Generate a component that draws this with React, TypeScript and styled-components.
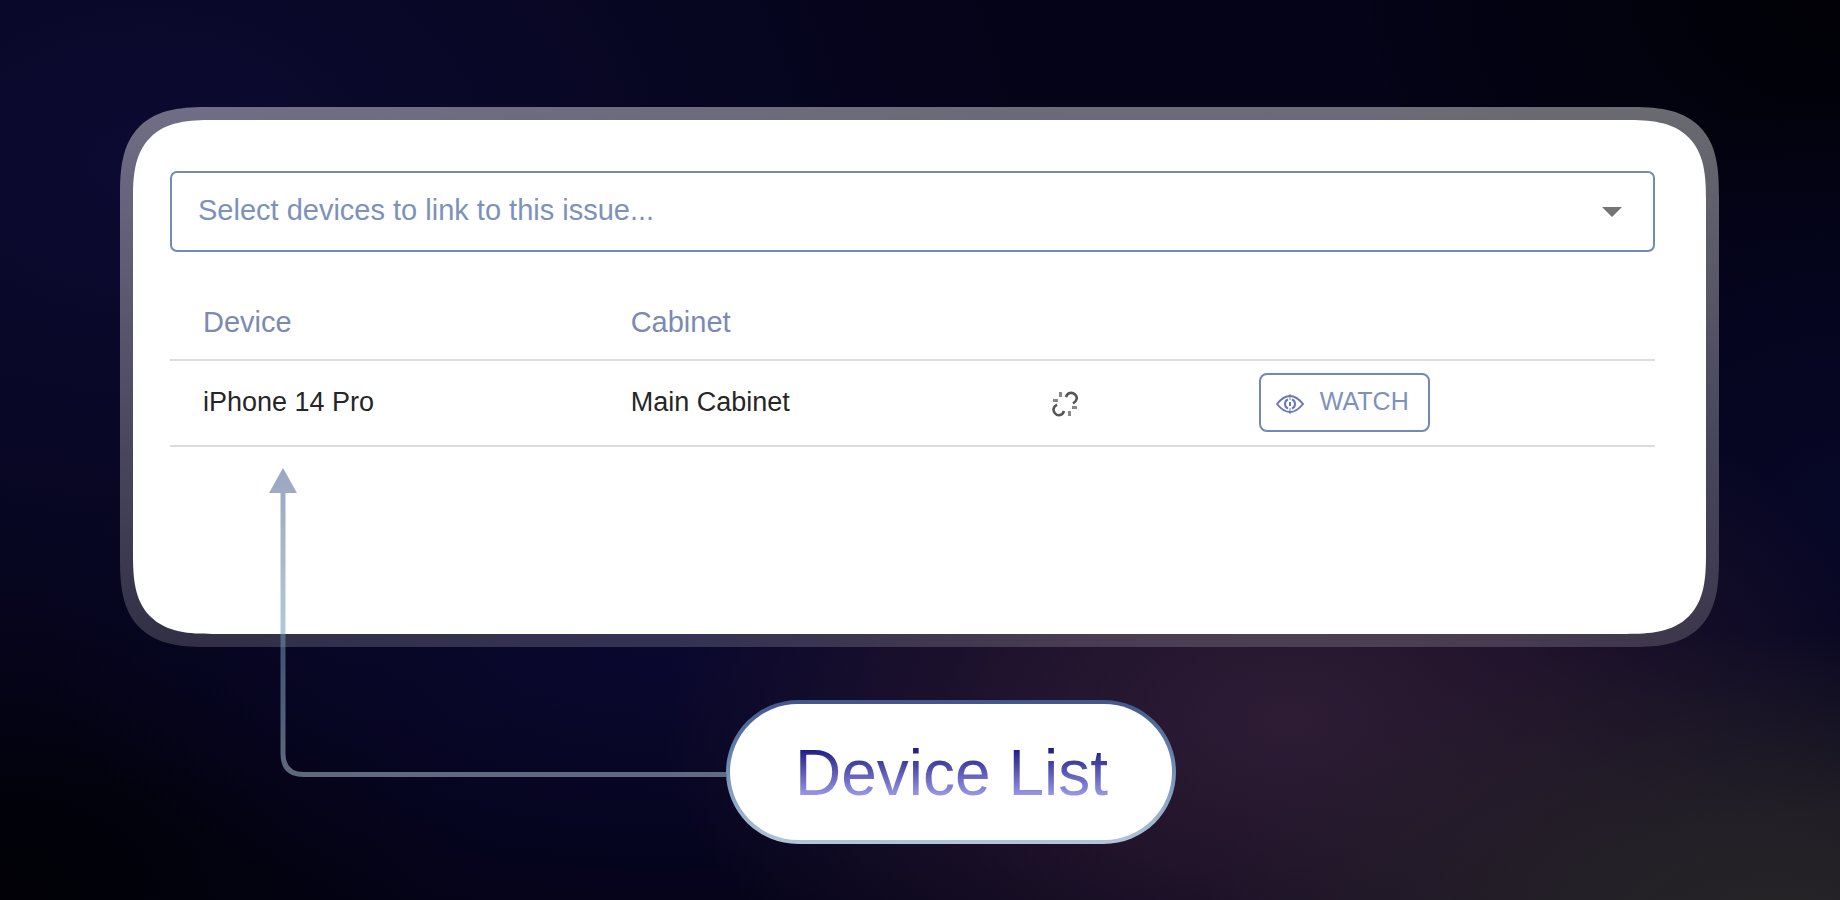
import React from "react";
import styled, { createGlobalStyle } from "styled-components";

const GlobalStyle = createGlobalStyle`
  *, *::before, *::after { box-sizing: border-box; }
  body {
    margin: 0;
    background: #030212;
    font-family: "Liberation Sans", Arial, sans-serif;
  }
`;

const Page = styled.main`
  min-height: 100vh;
  padding: 107px 121px 56px 120px;
  overflow: hidden;
  background:
    radial-gradient(ellipse 32% 34% at 97% 104%, #272527 0%, rgba(39, 36, 40, 0.8) 40%, rgba(38, 35, 42, 0) 100%),
    radial-gradient(ellipse 34% 42% at 70% 80%, #2e1c35 0%, rgba(46, 27, 52, 0.7) 40%, rgba(46, 27, 54, 0) 100%),
    radial-gradient(ellipse 34% 34% at 36% 71%, #0a0830 0%, rgba(10, 8, 48, 0) 100%),
    radial-gradient(ellipse 50% 70% at 8% 18%, #0c0a31 0%, rgba(12, 10, 49, 0) 100%),
    radial-gradient(ellipse 24% 44% at 100% 56%, #070727 0%, rgba(6, 6, 39, 0) 100%),
    radial-gradient(ellipse 26% 36% at 100% 0%, #010106 0%, rgba(1, 1, 6, 0) 100%),
    radial-gradient(ellipse 26% 36% at 0% 100%, #010106 0%, rgba(1, 1, 6, 0) 100%),
    #040317;
`;

const Frame = styled.section`
  padding: 13px;
  border-radius: 60px;
  background: linear-gradient(rgba(255, 255, 255, 0.41), rgba(255, 255, 255, 0.17));

  @supports (corner-shape: superellipse(1.5)) {
    border-radius: 90px;
    corner-shape: superellipse(1.5);
  }
`;

const Panel = styled.div`
  min-height: 514px;
  padding: 51px 51px 51px 37px;
  border-radius: 50px;
  background: #fff;

  @supports (corner-shape: superellipse(1.5)) {
    border-radius: 80px;
    corner-shape: superellipse(1.5);
  }
`;

const SelectField = styled.div`
  position: relative;
`;

const Select = styled.select`
  appearance: none;
  display: block;
  width: 100%;
  height: 81px;
  padding: 0 72px 4px 26px;
  border: 2px solid #6f8bb6;
  border-radius: 7px;
  background: #fff;
  color: #7c92ba;
  font-family: inherit;
  font-size: 29px;
`;

const Caret = styled.svg`
  position: absolute;
  top: 36px;
  right: 33px;
  pointer-events: none;
`;

const Table = styled.table`
  width: 100%;
  margin-top: 36px;
  border-collapse: collapse;
  table-layout: fixed;
`;

const HeadCell = styled.th<{ $width?: string }>`
  width: ${(p) => p.$width ?? "auto"};
  height: 72px;
  padding: 0 0 3px 33px;
  border-bottom: 2px solid #dcdcdc;
  color: #7a8ab5;
  font-size: 29px;
  font-weight: 400;
  text-align: left;
`;

const Cell = styled.td`
  height: 86px;
  padding: 0 0 2px 33px;
  border-bottom: 2px solid #dcdcdc;
  color: #262626;
  font-size: 27px;
`;

const IconButton = styled.button`
  display: flex;
  padding: 4px 0 0;
  border: 0;
  background: none;
  color: #555;
`;

const WatchButton = styled.button`
  display: flex;
  align-items: center;
  gap: 16px;
  height: 59px;
  padding: 0 19px 0 15px;
  border: 2px solid #7189b3;
  border-radius: 8px;
  background: #fff;
  color: #7c92ba;
  font-family: inherit;
  font-size: 25px;
  line-height: 50px;

  svg { margin-top: 4px; }
  span { padding-bottom: 2px; }
`;

const Callout = styled.div`
  display: grid;
  grid-template-columns: 37.9% auto;
  justify-content: start;
  margin-top: 53px;
`;

const ConnectorCell = styled.div`
  position: relative;
`;

const Connector = styled.svg`
  position: absolute;
  left: 149px;
  bottom: 67px;
  width: calc(100% - 149px);
  height: 309px;
  opacity: 0.52;
`;

const Pill = styled.div`
  display: flex;
  align-items: center;
  height: 144px;
  padding: 2px 64px 0 65px;
  border: 4px solid transparent;
  border-radius: 72px;
  background:
    linear-gradient(#fff, #fff) padding-box,
    linear-gradient(#41558a, #7191b7 50%, #b3c5d8) border-box;
`;

const PillLabel = styled.h2`
  margin: 0;
  background: linear-gradient(#211f85 20%, #9a98e6 80%);
  background-clip: text;
  color: transparent;
  font-size: 64px;
  font-weight: 400;
  line-height: 76px;
  white-space: nowrap;
`;

const UnlinkIcon = () => (
  <svg width="26" height="26" viewBox="0 0 26 26" fill="none" stroke="currentColor" strokeWidth="2.6" aria-hidden="true">
    <path d="M14 6C15.500 1.500 20 .8 23 3.500S25 10 21 12.500" />
    <path d="M5 13.500C1 16 .5 19.500 3.200 22.500S10.500 24.500 12 20" />
    <path d="M8.500 1v5M1 9.500h5M17.500 20v5M20 16.500h5" stroke="#888" strokeWidth="3" />
  </svg>
);

const EyeIcon = () => (
  <svg width="28" height="20" viewBox="0 0 28 20" fill="none" stroke="#6c77ba" strokeWidth="2" aria-hidden="true">
    <path d="M1 10C5 5 9 2 14 2S23 5 27 10C23 15 19 18 14 18S5 15 1 10Z" />
    <path d="M12 5.500C8 7 8 13 12 14.500M16 5.500C20 7 20 13 16 14.500" />
    <path d="M14 0v6M14 14v6" strokeWidth="1" />
    <path d="M14 8v4" />
  </svg>
);

export default function App() {
  return (
    <>
      <GlobalStyle />
      <Page>
        <Frame>
          <Panel>
            <SelectField>
              <Select aria-label="Devices" defaultValue="">
                <option value="">Select devices to link to this issue...</option>
                <option value="iphone">iPhone 14 Pro</option>
              </Select>
              <Caret width="20" height="10" viewBox="0 0 20 10" aria-hidden="true">
                <path d="M0 0h20L10 10Z" fill="#757575" />
              </Caret>
            </SelectField>
            <Table>
              <thead>
                <tr>
                  <HeadCell scope="col" $width="28.8%">Device</HeadCell>
                  <HeadCell scope="col" $width="28.4%">Cabinet</HeadCell>
                  <HeadCell $width="13.9%" />
                  <HeadCell />
                </tr>
              </thead>
              <tbody>
                <tr>
                  <Cell>iPhone 14 Pro</Cell>
                  <Cell>Main Cabinet</Cell>
                  <Cell>
                    <IconButton type="button" aria-label="Unlink device">
                      <UnlinkIcon />
                    </IconButton>
                  </Cell>
                  <Cell>
                    <WatchButton type="button">
                      <EyeIcon />
                      <span>WATCH</span>
                    </WatchButton>
                  </Cell>
                </tr>
              </tbody>
            </Table>
          </Panel>
        </Frame>
        <Callout>
          <ConnectorCell>
            <Connector aria-hidden="true">
              <defs>
                <linearGradient id="connector" gradientUnits="userSpaceOnUse" x1="0" y1="0" x2="0" y2="309">
                  <stop offset="0" stopColor="#41558a" />
                  <stop offset="0.5" stopColor="#7191b7" />
                  <stop offset="1" stopColor="#b3c5d8" />
                </linearGradient>
              </defs>
              <path d="M14 0L28 25H0Z" fill="url(#connector)" />
              <path d="M14 25V285.500Q14 306.500 35 306.500" fill="none" stroke="url(#connector)" strokeWidth="5" />
              <svg x="35" y="304" width="100%" height="5">
                <rect width="100%" height="5" fill="#b3c5d8" />
              </svg>
            </Connector>
          </ConnectorCell>
          <Pill>
            <PillLabel>Device List</PillLabel>
          </Pill>
        </Callout>
      </Page>
    </>
  );
}
